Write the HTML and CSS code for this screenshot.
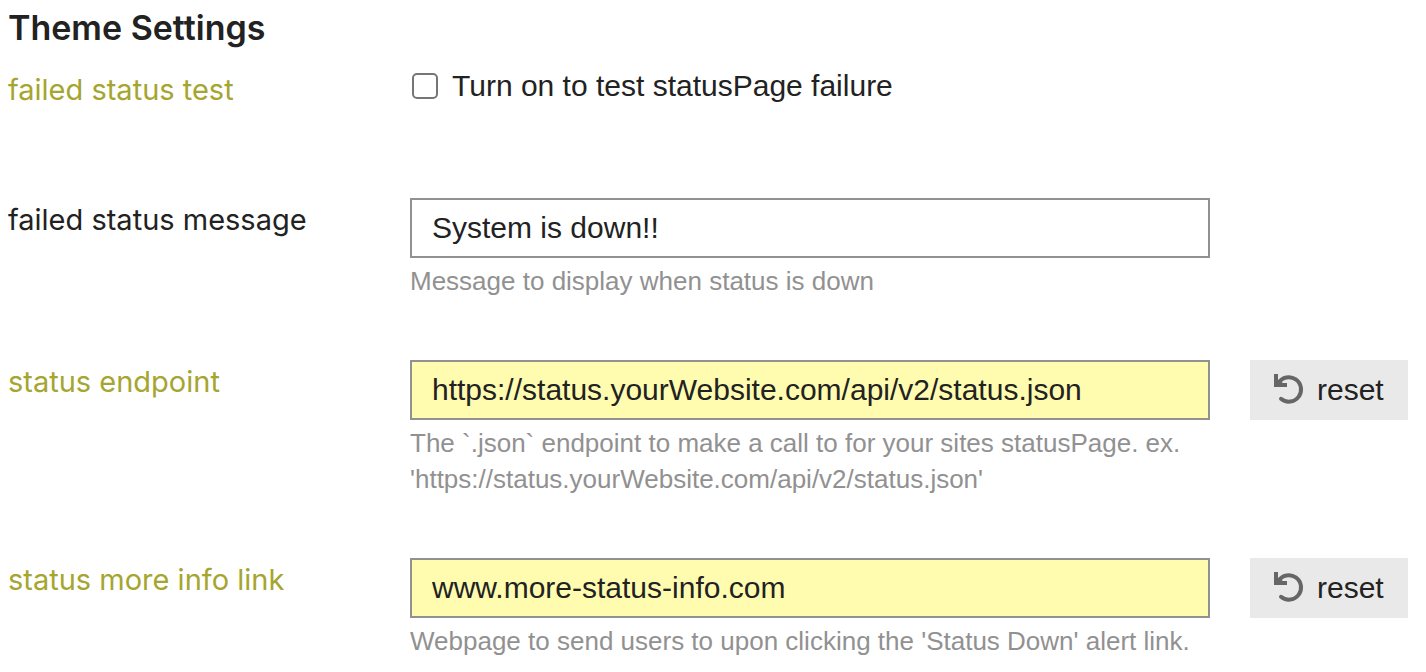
FILE: index.html
```html
<!DOCTYPE html>
<html lang="en">
<head>
<meta charset="utf-8">
<title>Theme Settings</title>
<link rel="stylesheet" href="styles.css">
</head>
<body>
<main class="settings">
  <h1 class="title">Theme Settings</h1>
  <form class="rows">
    <div class="row row-toggle">
      <label class="name changed" for="test">failed status test</label>
      <div class="value">
        <label class="toggle"><input class="check" type="checkbox" id="test"><span>Turn on to test statusPage failure</span></label>
      </div>
    </div>
    <div class="row">
      <label class="name" for="message">failed status message</label>
      <div class="value">
        <input class="field" type="text" id="message" value="System is down!!">
        <p class="desc">Message to display when status is down</p>
      </div>
    </div>
    <div class="row">
      <label class="name changed" for="endpoint">status endpoint</label>
      <div class="value">
        <input class="field field-changed" type="text" id="endpoint" value="https://status.yourWebsite.com/api/v2/status.json">
        <p class="desc">The `.json` endpoint to make a call to for your sites statusPage. ex. 'https://status.yourWebsite.com/api/v2/status.json'</p>
      </div>
      <button class="reset" type="button">
        <svg class="icon" viewBox="0 0 32 32" aria-hidden="true"><path class="arc" d="M4.500 9A12.200 12.200 0 1 1 7 24.800"/><path class="head" d="M0 0h4v6l5 3h4v4H0z"/></svg>
        <span>reset</span>
      </button>
    </div>
    <div class="row">
      <label class="name changed" for="link">status more info link</label>
      <div class="value">
        <input class="field field-changed" type="text" id="link" value="www.more-status-info.com">
        <p class="desc">Webpage to send users to upon clicking the 'Status Down' alert link.</p>
      </div>
      <button class="reset" type="button">
        <svg class="icon" viewBox="0 0 32 32" aria-hidden="true"><path class="arc" d="M4.500 9A12.200 12.200 0 1 1 7 24.800"/><path class="head" d="M0 0h4v6l5 3h4v4H0z"/></svg>
        <span>reset</span>
      </button>
    </div>
  </form>
</main>
</body>
</html>
```
FILE: styles.css
```css
* { box-sizing: border-box; }
body { margin: 0; background: #fff; color: #222; font-family: "Liberation Sans", Arial, sans-serif; }
.settings { padding: 6px 16px 0 8px; }
.title { margin: 0; font: 600 34px/44px Inter, sans-serif; }
.rows { display: flex; flex-direction: column; gap: 61px; padding-top: 18px; }
.row { display: grid; grid-template-columns: 362px minmax(0, 800px) max-content; column-gap: 40px; align-items: start; }
.row-toggle { min-height: 69px; }
.name { font: 29px/44px Inter, sans-serif; }
.changed { color: #a5a52f; }
.toggle { display: flex; align-items: center; gap: 14px; padding-left: 2px; font-size: 30px; line-height: 35px; }
.check { appearance: none; width: 26px; height: 26px; margin: 0; border: 2px solid #767676; border-radius: 5px; background: #fff; }
.check:checked { background: #0075ff; border-color: #0075ff; }
.field { display: block; width: 100%; height: 60px; padding: 0 20px; border: 2px solid #919191; border-radius: 0; background: #fff; color: #222; font: 30px "Liberation Sans", Arial, sans-serif; }
.field-changed { background: #fffcb0; }
.desc { margin: 5px 0 0; color: #919191; font-size: 26px; line-height: 36px; }
.reset { display: flex; align-items: center; gap: 11px; height: 60px; padding: 0 24px; border: 0; background: #e9e9e9; color: #222; font: 30px "Liberation Sans", Arial, sans-serif; }
.icon { width: 32px; height: 32px; }
.arc { fill: none; stroke: #666; stroke-width: 4; stroke-linecap: round; }
.head { fill: #666; }
```
